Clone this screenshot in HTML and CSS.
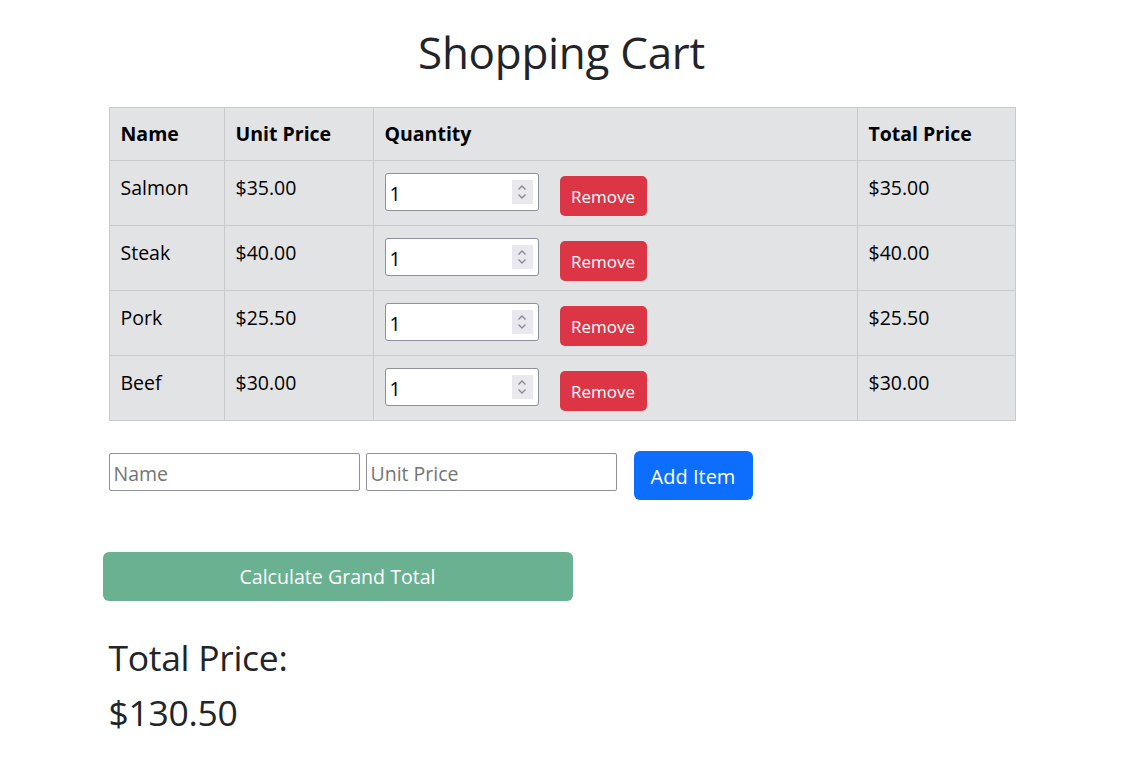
FILE: index.html
```html
<!DOCTYPE html>
<html lang="en">
<head>
<meta charset="utf-8">
<title>Shopping Cart</title>
<link rel="stylesheet" href="styles.css">
</head>
<body>
<div class="container">
  <h1 class="title">Shopping Cart</h1>
  <table class="cart">
    <colgroup>
      <col class="c-name"><col class="c-unit"><col class="c-qty"><col class="c-total">
    </colgroup>
    <thead>
      <tr><th>Name</th><th>Unit Price</th><th>Quantity</th><th>Total Price</th></tr>
    </thead>
    <tbody>
      <tr>
        <td>Salmon</td><td>$35.00</td>
        <td><div class="qty-cell"><div class="num"><input class="num-input" type="text" value="1"><span class="spin"><svg width="20" height="24" viewBox="0 0 20 24"><path d="M6.5 9.5 L10 6 L13.5 9.5 M6.5 14.5 L10 18 L13.5 14.5" fill="none" stroke="#8a8a92" stroke-width="1.4"/></svg></span></div><button class="btn-remove">Remove</button></div></td>
        <td>$35.00</td>
      </tr>
      <tr>
        <td>Steak</td><td>$40.00</td>
        <td><div class="qty-cell"><div class="num"><input class="num-input" type="text" value="1"><span class="spin"><svg width="20" height="24" viewBox="0 0 20 24"><path d="M6.5 9.5 L10 6 L13.5 9.5 M6.5 14.5 L10 18 L13.5 14.5" fill="none" stroke="#8a8a92" stroke-width="1.4"/></svg></span></div><button class="btn-remove">Remove</button></div></td>
        <td>$40.00</td>
      </tr>
      <tr>
        <td>Pork</td><td>$25.50</td>
        <td><div class="qty-cell"><div class="num"><input class="num-input" type="text" value="1"><span class="spin"><svg width="20" height="24" viewBox="0 0 20 24"><path d="M6.5 9.5 L10 6 L13.5 9.5 M6.5 14.5 L10 18 L13.5 14.5" fill="none" stroke="#8a8a92" stroke-width="1.4"/></svg></span></div><button class="btn-remove">Remove</button></div></td>
        <td>$25.50</td>
      </tr>
      <tr>
        <td>Beef</td><td>$30.00</td>
        <td><div class="qty-cell"><div class="num"><input class="num-input" type="text" value="1"><span class="spin"><svg width="20" height="24" viewBox="0 0 20 24"><path d="M6.5 9.5 L10 6 L13.5 9.5 M6.5 14.5 L10 18 L13.5 14.5" fill="none" stroke="#8a8a92" stroke-width="1.4"/></svg></span></div><button class="btn-remove">Remove</button></div></td>
        <td>$30.00</td>
      </tr>
    </tbody>
  </table>

  <div class="add-row">
    <input class="field" type="text" placeholder="Name">
    <input class="field" type="text" placeholder="Unit Price">
    <button class="btn-add">Add Item</button>
  </div>

  <button class="btn-calc">Calculate Grand Total</button>

  <div class="grand">
    <div>Total Price:</div>
    <div>$130.50</div>
  </div>
</div>
</body>
</html>
```

FILE: styles.css
```css
* { box-sizing: border-box; }
html, body { margin: 0; padding: 0; background: #fff; }
body {
  font-family: "Open Sans", "Noto Sans", sans-serif;
  color: #212529;
  font-size: 16px;
}
.container {
  width: 906px;
  margin: 0 auto;
  padding-top: 24px;
}
.title {
  margin: 0;
  text-align: center;
  font-weight: 400;
  font-size: 44px;
  line-height: 56px;
  letter-spacing: -0.3px;
}
.cart {
  margin-top: 27px;
  width: 906px;
  border-collapse: collapse;
  background: #e2e3e5;
  color: #000;
  font-size: 19.5px;
  table-layout: fixed;
}
.c-name { width: 115px; }
.c-unit { width: 149px; }
.c-qty { width: 484px; }
.c-total { width: 158px; }
.cart th, .cart td {
  border: 1px solid #c9cacc;
  padding: 11px 11px;
  text-align: left;
  vertical-align: top;
  line-height: 30px;
}
.cart th { font-weight: 700; }
.cart td { padding-top: 12px; padding-bottom: 9px; }
.qty-cell {
  display: flex;
  align-items: flex-start;
  gap: 21px;
}
.num {
  position: relative;
  width: 154px;
  height: 38px;
}
.num-input {
  width: 100%;
  height: 100%;
  border: 1px solid #8f8f9d;
  border-radius: 3px;
  background: #fff;
  padding: 2px 30px 0 4px;
  font-family: "Open Sans", "Noto Sans", sans-serif;
  font-size: 19.5px;
  color: #000;
}
.spin {
  position: absolute;
  right: 6px;
  top: 7px;
  width: 21px;
  height: 24px;
  background: #e9e9ed;
  display: flex;
  align-items: center;
  justify-content: center;
}
.btn-remove {
  margin-top: 3px;
  width: 87px;
  height: 40px;
  border: none;
  border-radius: 5px;
  background: #dc3545;
  color: #fff;
  font-family: "Open Sans", "Noto Sans", sans-serif;
  font-size: 17px;
  padding: 0;
}
.add-row {
  margin-top: 30px;
  display: flex;
  align-items: flex-start;
}
.field {
  margin-top: 2px;
  width: 251px;
  height: 38px;
  border: 1px solid #8f8f9d;
  border-radius: 2px;
  padding: 2px 4px 0;
  font-family: "Open Sans", "Noto Sans", sans-serif;
  font-size: 19.5px;
  margin-right: 6px;
}
.field::placeholder { color: #757575; }
.btn-add {
  margin-left: 11px;
  width: 119px;
  height: 49px;
  border: none;
  border-radius: 6px;
  background: #0d6efd;
  color: #fff;
  font-family: "Open Sans", "Noto Sans", sans-serif;
  font-size: 20px;
  padding: 1px 0 0;
}
.btn-calc {
  display: block;
  margin: 52px 0 0 -6px;
  width: 470px;
  height: 49px;
  border: none;
  border-radius: 6px;
  background: #69b190;
  color: #fff;
  font-family: "Open Sans", "Noto Sans", sans-serif;
  font-size: 19.6px;
  padding: 0;
}
.grand {
  margin-top: 29px;
  font-size: 35.5px;
  line-height: 55px;
  letter-spacing: -0.3px;
}
```
